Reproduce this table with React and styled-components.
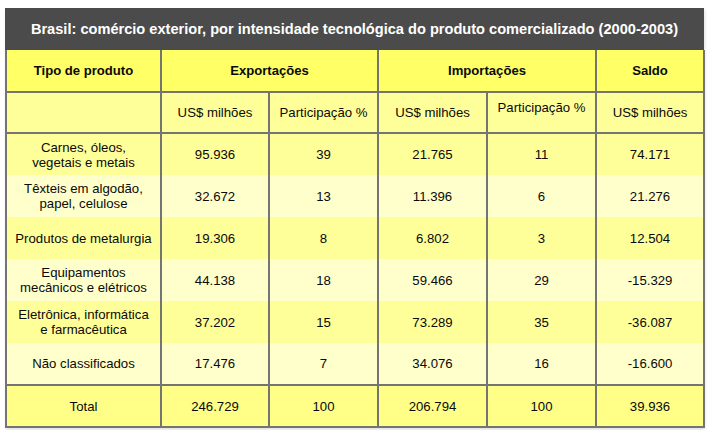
import React from "react";
import styled, { createGlobalStyle } from "styled-components";

const rows = [
  { name: ["Carnes, óleos,", "vegetais e metais"], values: ["95.936", "39", "21.765", "11", "74.171"] },
  { name: ["Têxteis em algodão,", "papel, celulose"], values: ["32.672", "13", "11.396", "6", "21.276"] },
  { name: ["Produtos de metalurgia"], values: ["19.306", "8", "6.802", "3", "12.504"] },
  { name: ["Equipamentos", "mecânicos e elétricos"], values: ["44.138", "18", "59.466", "29", "-15.329"] },
  { name: ["Eletrônica, informática", "e farmacêutica"], values: ["37.202", "15", "73.289", "35", "-36.087"] },
  { name: ["Não classificados"], values: ["17.476", "7", "34.076", "16", "-16.600"] },
];

const total = ["246.729", "100", "206.794", "100", "39.936"];

const GlobalStyle = createGlobalStyle`
  body {
    margin: 0;
    background: #ffffff;
    font-family: "Liberation Sans", Arial, sans-serif;
    color: #0a0a0a;
  }
`;

const App = () => (
  <>
    <GlobalStyle />
    <S.Page>
      <S.Panel>
        <S.Title>
          Brasil: comércio exterior, por intensidade tecnológica do produto
          comercializado (2000-2003)
        </S.Title>
        <S.Table>
          <colgroup>
            <col style={{ width: 155 }} />
            <col style={{ width: 108 }} />
            <col style={{ width: 109 }} />
            <col style={{ width: 109 }} />
            <col style={{ width: 109 }} />
            <col style={{ width: 108 }} />
          </colgroup>
          <thead>
            <S.HeadRow>
              <S.Head>Tipo de produto</S.Head>
              <S.Head colSpan={2}>Exportações</S.Head>
              <S.Head colSpan={2}>Importações</S.Head>
              <S.Head>Saldo</S.Head>
            </S.HeadRow>
            <S.SubHeadRow>
              <S.SubHead />
              <S.SubHead>US$ milhões</S.SubHead>
              <S.SubHead>Participação %</S.SubHead>
              <S.SubHead>US$ milhões</S.SubHead>
              <S.SubHead>
                <S.Raised>Participação %</S.Raised>
              </S.SubHead>
              <S.SubHead>US$ milhões</S.SubHead>
            </S.SubHeadRow>
          </thead>
          <tbody>
            {rows.map((row, i) => (
              <S.Row key={row.name[0]} $light={i % 2 === 1}>
                <S.Cell>
                  {row.name.map(line => (
                    <div key={line}>{line}</div>
                  ))}
                </S.Cell>
                {row.values.map((v, j) => (
                  <S.Cell key={j}>{v}</S.Cell>
                ))}
              </S.Row>
            ))}
            <S.TotalRow>
              <S.Cell>Total</S.Cell>
              {total.map((v, j) => (
                <S.Cell key={j}>{v}</S.Cell>
              ))}
            </S.TotalRow>
          </tbody>
        </S.Table>
      </S.Panel>
    </S.Page>
  </>
);

const S = {
  Page: styled.div`
    padding: 8px 0 0 5px;
    width: 709px;
    height: 430px;
    box-sizing: border-box;
  `,
  Panel: styled.div`
    width: 699px;
    box-shadow: 1px 2px 3px rgba(0, 0, 0, 0.12);
  `,
  Title: styled.div`
    height: 42px;
    display: flex;
    align-items: center;
    justify-content: center;
    background: #4b4b4b;
    color: #ffffff;
    font-weight: bold;
    font-size: 14.6px;
  `,
  Table: styled.table`
    width: 699px;
    table-layout: fixed;
    border-collapse: collapse;
    border: 2px solid #747474;
    border-top: none;
    font-size: 13.2px;
    text-align: center;
  `,
  HeadRow: styled.tr`
    height: 42px;
    background: #ffff66;
  `,
  Head: styled.th`
    padding: 0;
    border: 2px solid #747474;
    border-top: none;
    font-weight: bold;
    font-size: 13.1px;
  `,
  SubHeadRow: styled.tr`
    height: 41px;
    background: #ffff99;
  `,
  SubHead: styled.td`
    padding: 0;
    border: 2px solid #747474;
  `,
  Raised: styled.div`
    margin-bottom: 11px;
  `,
  Row: styled.tr`
    height: 42px;
    background: ${p => (p.$light ? "#ffffcc" : "#ffff99")};
  `,
  TotalRow: styled.tr`
    height: 42px;
    background: #ffff88;
    border-top: 2px solid #747474;
  `,
  Cell: styled.td`
    padding: 0;
    line-height: 15px;
    border-left: 2px solid #747474;
    border-right: 2px solid #747474;
  `,
};

export default App;
